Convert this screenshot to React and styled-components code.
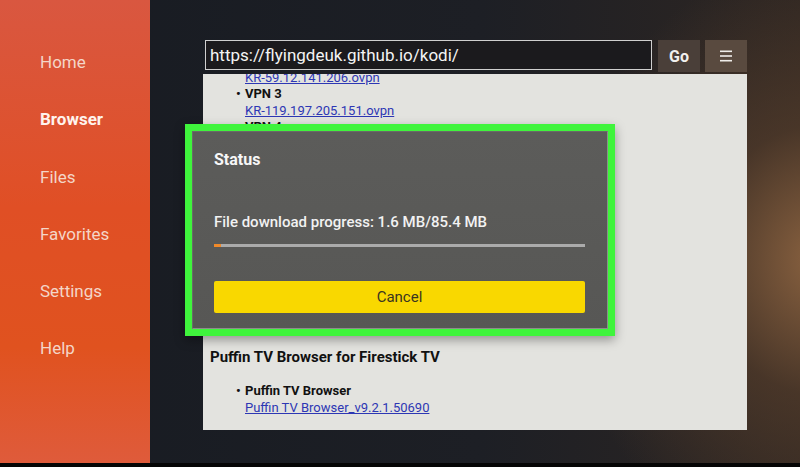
import React from 'react';
import styled, { createGlobalStyle } from 'styled-components';

const Global = createGlobalStyle`
  html, body { margin: 0; padding: 0; }
  body {
    width: 800px;
    height: 467px;
    overflow: hidden;
    background: #0c0d10;
    font-family: Roboto, "Liberation Sans", sans-serif;
  }
`;

const Screen = styled.div`
  position: relative;
  display: flex;
  width: 800px;
  height: 463px;
  border-bottom: 4px solid #050505;
  background:
    radial-gradient(ellipse 260px 300px at 820px 260px, #8a6240 0%, rgba(90, 64, 44, 0.6) 45%, rgba(30, 30, 34, 0) 100%),
    linear-gradient(90deg, #171b22 0%, #1d1f25 60%, #2e2622 100%);
  overflow: hidden;
`;

const Sidebar = styled.nav`
  width: 150px;
  flex-shrink: 0;
  display: flex;
  flex-direction: column;
  gap: 37.3px;
  padding: 52px 0 0 40px;
  box-sizing: border-box;
  background: linear-gradient(180deg, #d95740 0%, #e04f25 45%, #e0521f 75%, #df5b3b 100%);
`;

const NavItem = styled.div`
  font-size: 17px;
  line-height: 20px;
  color: ${p => (p.active ? '#fff4ee' : '#f4d6c8')};
  font-weight: ${p => (p.active ? 700 : 400)};
`;

const Main = styled.div`
  flex: 1;
  display: flex;
  flex-direction: column;
  padding: 40px 53px 0 53px;
`;

const TopBar = styled.div`
  display: flex;
  align-items: stretch;
  gap: 5px;
  height: 32px;
`;

const UrlBox = styled.div`
  flex: 1;
  margin-left: 2px;
  margin-right: 1px;
  height: 30px;
  display: flex;
  align-items: center;
  padding-left: 4px;
  border: 1px solid #cfcfcf;
  background: #1b1a1d;
  color: #f4f4f4;
  font-size: 17px;
  box-sizing: border-box;
`;

const BarButton = styled.div`
  width: 42px;
  height: 32px;
  display: flex;
  align-items: center;
  justify-content: center;
  background: ${p => p.bg};
  color: #f2f0ee;
  font-size: 16px;
  font-weight: 700;
`;

const Page = styled.div`
  margin-top: 2px;
  height: 356px;
  background: #e3e3df;
  overflow: hidden;
  color: #111;
`;

const PageInner = styled.div`
  margin-top: -5px;
`;

const List = styled.ul`
  margin: 0;
  padding: 0 0 0 42px;
  list-style: none;
`;

const Item = styled.li`
  position: relative;
  font-size: 13px;
  line-height: 16px;
  font-weight: 700;
  &::before {
    content: ${p => (p.plain ? 'none' : "'•'")};
    position: absolute;
    left: -9px;
  }
`;

const FileLink = styled.a`
  display: block;
  font-weight: 400;
  color: #2d37b4;
  text-decoration: underline;
  font-size: 13px;
  line-height: 17px;
`;

const Heading = styled.h3`
  margin: 213px 0 0 7px;
  font-size: 15px;
  line-height: 18px;
  font-weight: 700;
`;

const Section = styled.div`
  margin-top: 17px;
`;

const DialogFrame = styled.div`
  position: absolute;
  left: 185px;
  top: 124px;
  width: 430px;
  height: 212px;
  box-sizing: border-box;
  border: 7px solid #3ff43c;
  box-shadow: 0 4px 10px rgba(0, 0, 0, 0.35);
  display: flex;
`;

const Dialog = styled.div`
  flex: 1;
  background: linear-gradient(180deg, #5c5c5a 0%, #575755 100%);
  border: 1px solid #8d8d8b;
  border-left-color: #6a6a68;
  border-top-color: #6a6a68;
  padding: 18px 22px 15px 21px;
  display: flex;
  flex-direction: column;
`;

const Title = styled.div`
  color: #f7f7f7;
  font-size: 16px;
  line-height: 20px;
  font-weight: 700;
`;

const ProgressText = styled.div`
  margin-top: 42px;
  color: #f2f2f2;
  font-size: 15px;
  line-height: 20px;
  font-weight: 500;
`;

const Track = styled.div`
  margin-top: 12px;
  height: 3px;
  background: #ababab;
  position: relative;
`;

const Fill = styled.div`
  height: 100%;
  background: #f08a2a;
`;

const CancelButton = styled.div`
  margin-top: 34px;
  height: 32px;
  border-radius: 2px;
  background: #f9d800;
  color: #3a3420;
  font-size: 15px;
  display: flex;
  align-items: center;
  justify-content: center;
`;

const MenuIcon = () => (
  <svg width="14" height="14" viewBox="0 0 14 14">
    <rect x="1" y="1.5" width="12" height="1.6" fill="#efedea" />
    <rect x="1" y="6.2" width="12" height="1.6" fill="#efedea" />
    <rect x="1" y="10.9" width="12" height="1.6" fill="#efedea" />
  </svg>
);

const navItems = ['Home', 'Browser', 'Files', 'Favorites', 'Settings', 'Help'];

const App = () => {
  const done = 1.6;
  const total = 85.4;
  return (
    <>
      <Global />
      <Screen>
        <Sidebar>
          {navItems.map(n => (
            <NavItem key={n} active={n === 'Browser'}>{n}</NavItem>
          ))}
        </Sidebar>
        <Main>
          <TopBar>
            <UrlBox>https://flyingdeuk.github.io/kodi/</UrlBox>
            <BarButton bg="#4a3f39">Go</BarButton>
            <BarButton bg="#594a3f"><MenuIcon /></BarButton>
          </TopBar>
          <Page>
            <PageInner>
              <List>
                <Item plain>
                  <FileLink>KR-59.12.141.206.ovpn</FileLink>
                </Item>
                <Item>
                  VPN 3
                  <FileLink>KR-119.197.205.151.ovpn</FileLink>
                </Item>
                <Item>VPN 4</Item>
              </List>
              <Heading>Puffin TV Browser for Firestick TV</Heading>
              <Section>
                <List>
                  <Item>
                    Puffin TV Browser
                    <FileLink>Puffin TV Browser_v9.2.1.50690</FileLink>
                  </Item>
                </List>
              </Section>
            </PageInner>
          </Page>
        </Main>
        <DialogFrame>
          <Dialog>
            <Title>Status</Title>
            <ProgressText>File download progress: {done} MB/{total} MB</ProgressText>
            <Track>
              <Fill style={{ width: `${Math.max((done / total) * 100, 1)}%` }} />
            </Track>
            <CancelButton>Cancel</CancelButton>
          </Dialog>
        </DialogFrame>
      </Screen>
    </>
  );
};

export default App;
